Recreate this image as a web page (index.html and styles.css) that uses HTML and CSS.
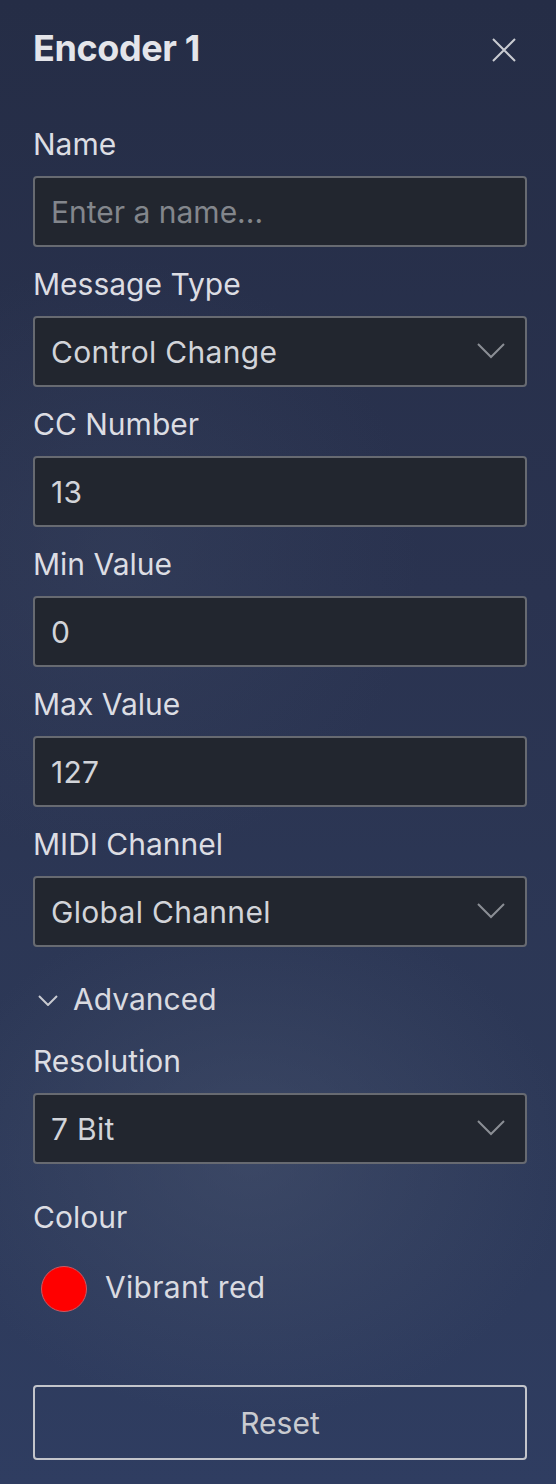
FILE: index.html
```html
<!DOCTYPE html>
<html lang="en">
<head>
<meta charset="utf-8">
<title>Encoder 1</title>
<link rel="stylesheet" href="styles.css">
</head>
<body>
<div class="panel">
  <header class="header">
    <h1 class="title">Encoder 1</h1>
    <button class="close" aria-label="Close">
      <svg width="24" height="24" viewBox="0 0 24 24"><path d="M1 1 L23 23 M23 1 L1 23" stroke="#c9cbd1" stroke-width="2" fill="none"/></svg>
    </button>
  </header>

  <div class="field">
    <label class="label">Name</label>
    <div class="input"><span class="placeholder">Enter a name...</span></div>
  </div>

  <div class="field">
    <label class="label">Message Type</label>
    <div class="input select"><span>Control Change</span>
      <svg class="chev" width="28" height="16" viewBox="0 0 28 16"><path d="M1 1 L14 14 L27 1" stroke="#8b8e95" stroke-width="2" fill="none"/></svg>
    </div>
  </div>

  <div class="field">
    <label class="label">CC Number</label>
    <div class="input"><span>13</span></div>
  </div>

  <div class="field">
    <label class="label">Min Value</label>
    <div class="input"><span>0</span></div>
  </div>

  <div class="field">
    <label class="label">Max Value</label>
    <div class="input"><span>127</span></div>
  </div>

  <div class="field">
    <label class="label">MIDI Channel</label>
    <div class="input select"><span>Global Channel</span>
      <svg class="chev" width="28" height="16" viewBox="0 0 28 16"><path d="M1 1 L14 14 L27 1" stroke="#8b8e95" stroke-width="2" fill="none"/></svg>
    </div>
  </div>

  <div class="advanced">
    <svg class="adv-chev" width="20" height="11" viewBox="0 0 20 11"><path d="M1 1 L10 10 L19 1" stroke="#c8cad0" stroke-width="2" fill="none"/></svg>
    <span>Advanced</span>
  </div>

  <div class="field">
    <label class="label">Resolution</label>
    <div class="input select"><span>7 Bit</span>
      <svg class="chev" width="28" height="16" viewBox="0 0 28 16"><path d="M1 1 L14 14 L27 1" stroke="#8b8e95" stroke-width="2" fill="none"/></svg>
    </div>
  </div>

  <div class="colour">
    <label class="label">Colour</label>
    <div class="swatch-row">
      <span class="swatch"></span>
      <span class="swatch-name">Vibrant red</span>
    </div>
  </div>

  <button class="reset">Reset</button>
</div>
</body>
</html>
```

FILE: styles.css
```css
html, body {
  margin: 0;
  padding: 0;
}
body {
  width: 556px;
  height: 1484px;
  overflow: hidden;
  font-family: Inter, "Noto Sans", sans-serif;
  color: #dcdde3;
  background:
    radial-gradient(ellipse 320px 260px at 250px 1160px, rgba(70, 82, 110, 0.55), rgba(70, 82, 110, 0) 100%),
    radial-gradient(ellipse 300px 300px at 120px 560px, rgba(60, 72, 100, 0.35), rgba(60, 72, 100, 0) 100%),
    linear-gradient(180deg, #252d46 0%, #2a3350 40%, #2d3958 75%, #2f3d61 100%);
}
.panel {
  padding: 26px 29px 0 33px;
  display: flex;
  flex-direction: column;
}
.header {
  display: flex;
  align-items: center;
  justify-content: space-between;
  height: 44px;
  margin-bottom: 56px;
}
.title {
  margin: 0;
  font-size: 36px;
  line-height: 44px;
  font-weight: 700;
  color: #e4e5ea;
  letter-spacing: -0.4px;
}
.close {
  background: none;
  border: 0;
  padding: 0;
  margin: 4px 11px 0 0;
  width: 24px;
  height: 24px;
  display: flex;
}
.field {
  display: flex;
  flex-direction: column;
  gap: 14px;
  margin-bottom: 19px;
}
.label {
  font-size: 30px;
  line-height: 36px;
  color: #dcdde3;
}
.input {
  box-sizing: border-box;
  height: 71px;
  background: #22262f;
  border: 2px solid #676a71;
  border-radius: 4px;
  padding: 0 20px 0 16px;
  display: flex;
  align-items: center;
  justify-content: space-between;
  font-size: 30px;
  letter-spacing: 0.3px;
  color: #d2d4d9;
}
.placeholder {
  color: #83868c;
  letter-spacing: 0;
}
.chev {
  display: block;
  margin-top: -2px;
}
.advanced {
  display: flex;
  align-items: center;
  gap: 15px;
  margin-top: 15px;
  margin-bottom: 26px;
  padding-left: 5px;
  font-size: 30px;
  line-height: 36px;
  color: #d9dae0;
}
.adv-chev {
  display: block;
  margin-top: 3px;
}
.colour {
  display: flex;
  flex-direction: column;
  gap: 31px;
  margin-top: 16px;
}
.swatch-row {
  display: flex;
  align-items: center;
  gap: 18px;
  padding-left: 8px;
  height: 46px;
}
.swatch {
  box-sizing: border-box;
  width: 46px;
  height: 46px;
  border-radius: 50%;
  background: #ff0000;
  border: 1px solid #c85a64;
}
.swatch-name {
  font-size: 30px;
  line-height: 36px;
  color: #d9dae0;
  margin-top: -4px;
  letter-spacing: 0.3px;
}
.reset {
  box-sizing: border-box;
  margin-top: 73px;
  height: 75px;
  width: 100%;
  background: transparent;
  border: 2px solid #c3c5cb;
  border-radius: 4px;
  font-family: Inter, "Noto Sans", sans-serif;
  font-size: 30px;
  color: #c9cbd0;
  padding: 0;
}
```
